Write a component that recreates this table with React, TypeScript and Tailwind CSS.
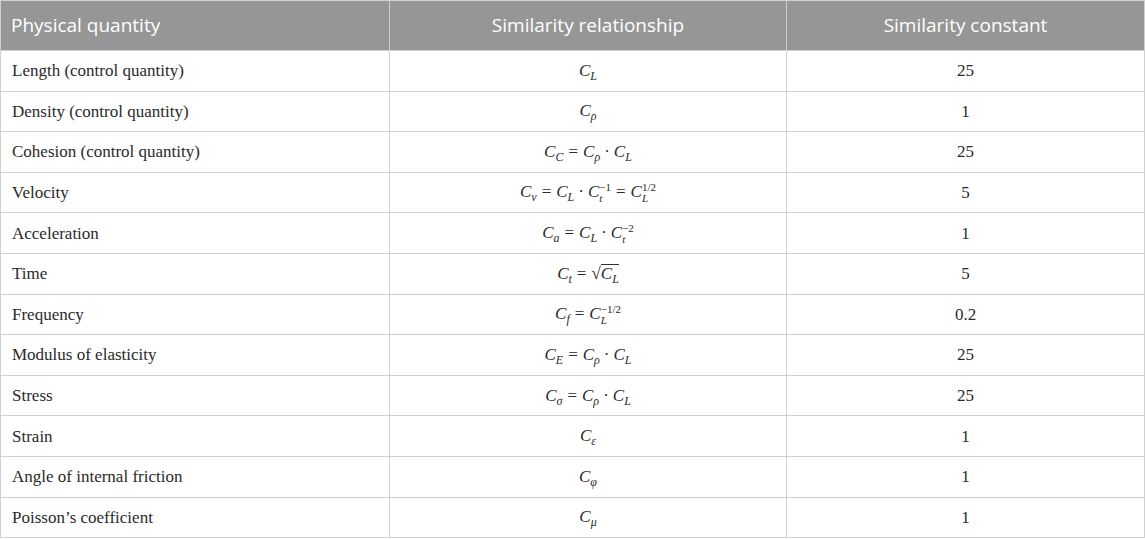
import type { ReactNode } from "react";

const C = ({ sub, sup }: { sub?: ReactNode; sup?: ReactNode }) => (
  <span className="whitespace-nowrap">
    <i>C</i>
    {sup ? (
      <span className="inline-block align-[-5px] text-[11px] leading-[11px]">
        <span className="block text-left">{sup}</span>
        <i className="block text-left">{sub}</i>
      </span>
    ) : (
      <i className="inline-block align-[-4px] text-[12px] leading-none">{sub}</i>
    )}
  </span>
);

const Eq = () => <span className="mx-[5px]">=</span>;
const Dot = () => <span className="mx-[4px]">·</span>;

const Rows: { name: string; rel: ReactNode; value: string }[] = [
  { name: "Length (control quantity)", rel: <C sub="L" />, value: "25" },
  { name: "Density (control quantity)", rel: <C sub="ρ" />, value: "1" },
  {
    name: "Cohesion (control quantity)",
    rel: (
      <>
        <C sub="C" />
        <Eq />
        <C sub="ρ" />
        <Dot />
        <C sub="L" />
      </>
    ),
    value: "25",
  },
  {
    name: "Velocity",
    rel: (
      <>
        <C sub="v" />
        <Eq />
        <C sub="L" />
        <Dot />
        <C sub="t" sup="−1" />
        <Eq />
        <C sub="L" sup="1/2" />
      </>
    ),
    value: "5",
  },
  {
    name: "Acceleration",
    rel: (
      <>
        <C sub="a" />
        <Eq />
        <C sub="L" />
        <Dot />
        <C sub="t" sup="−2" />
      </>
    ),
    value: "1",
  },
  {
    name: "Time",
    rel: (
      <>
        <C sub="t" />
        <Eq />
        <span>√</span>
        <span className="inline-block border-t border-[#333] leading-[18px]">
          <C sub="L" />
        </span>
      </>
    ),
    value: "5",
  },
  {
    name: "Frequency",
    rel: (
      <>
        <C sub="f" />
        <Eq />
        <C sub="L" sup="−1/2" />
      </>
    ),
    value: "0.2",
  },
  {
    name: "Modulus of elasticity",
    rel: (
      <>
        <C sub="E" />
        <Eq />
        <C sub="ρ" />
        <Dot />
        <C sub="L" />
      </>
    ),
    value: "25",
  },
  {
    name: "Stress",
    rel: (
      <>
        <C sub="σ" />
        <Eq />
        <C sub="ρ" />
        <Dot />
        <C sub="L" />
      </>
    ),
    value: "25",
  },
  { name: "Strain", rel: <C sub="ε" />, value: "1" },
  { name: "Angle of internal friction", rel: <C sub="φ" />, value: "1" },
  { name: "Poisson’s coefficient", rel: <C sub="μ" />, value: "1" },
];

export default function App() {
  return (
    <div className="h-[539px] w-[1145px] bg-white">
      <table className="w-[1144px] table-fixed border-collapse text-[17px] text-[#2a2a2a]" style={{ fontFamily: '"Liberation Serif", serif' }}>
        <colgroup>
          <col className="w-[389px]" />
          <col className="w-[397px]" />
          <col className="w-[358px]" />
        </colgroup>
        <thead>
          <tr className="h-[50px] bg-[#969696] text-[19px] text-white" style={{ fontFamily: '"Open Sans", sans-serif' }}>
            <th className="border border-[#d0d0d0] px-[10px] text-left font-normal">Physical quantity</th>
            <th className="border border-[#d0d0d0] px-[10px] text-center font-normal">Similarity relationship</th>
            <th className="border border-[#d0d0d0] px-[10px] text-center font-normal">Similarity constant</th>
          </tr>
        </thead>
        <tbody>
          {Rows.map((row) => (
            <tr key={row.name} className="h-[40.6px]">
              <td className="border border-[#d0d0d0] px-[11px] leading-tight">{row.name}</td>
              <td className="border border-[#d0d0d0] px-[10px] text-center leading-tight">{row.rel}</td>
              <td className="border border-[#d0d0d0] px-[10px] text-center leading-tight">{row.value}</td>
            </tr>
          ))}
        </tbody>
      </table>
    </div>
  );
}
